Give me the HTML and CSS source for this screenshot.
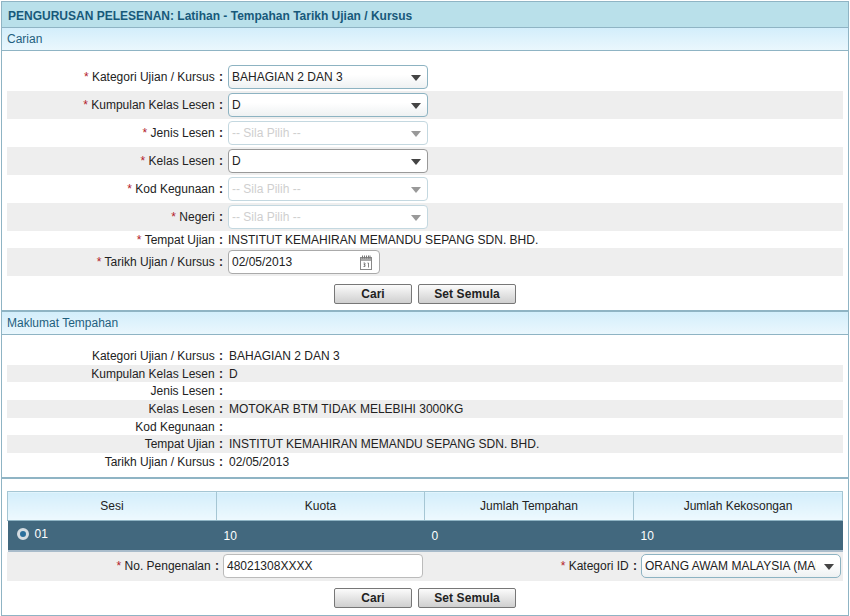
FILE: index.html
```html
<!DOCTYPE html>
<html lang="en">

<head>
  <meta charset="UTF-8">
  <title>Tempahan Tarikh Ujian / Kursus</title>
  <link rel="stylesheet" href="styles.css">
</head>

<body>
  <div class="page">
    <h1 class="page-title">PENGURUSAN PELESENAN: Latihan - Tempahan Tarikh Ujian / Kursus</h1>

    <h2 class="section-head">Carian</h2>
    <div class="form-rows">
      <div class="row">
        <label class="label"><span class="req">*</span> Kategori Ujian / Kursus <span class="colon">:</span></label>
        <div class="select-wrap"><select><option>BAHAGIAN 2 DAN 3</option></select></div>
      </div>
      <div class="row grey">
        <label class="label"><span class="req">*</span> Kumpulan Kelas Lesen <span class="colon">:</span></label>
        <div class="select-wrap"><select><option>D</option></select></div>
      </div>
      <div class="row">
        <label class="label"><span class="req">*</span> Jenis Lesen <span class="colon">:</span></label>
        <div class="select-wrap disabled"><select disabled><option>-- Sila Pilih --</option></select></div>
      </div>
      <div class="row grey">
        <label class="label"><span class="req">*</span> Kelas Lesen <span class="colon">:</span></label>
        <div class="select-wrap plain"><select><option>D</option></select></div>
      </div>
      <div class="row">
        <label class="label"><span class="req">*</span> Kod Kegunaan <span class="colon">:</span></label>
        <div class="select-wrap disabled"><select disabled><option>-- Sila Pilih --</option></select></div>
      </div>
      <div class="row grey">
        <label class="label"><span class="req">*</span> Negeri <span class="colon">:</span></label>
        <div class="select-wrap disabled"><select disabled><option>-- Sila Pilih --</option></select></div>
      </div>
      <div class="row short">
        <label class="label"><span class="req">*</span> Tempat Ujian <span class="colon">:</span></label>
        <span class="value">INSTITUT KEMAHIRAN MEMANDU SEPANG SDN. BHD.</span>
      </div>
      <div class="row grey">
        <label class="label"><span class="req">*</span> Tarikh Ujian / Kursus <span class="colon">:</span></label>
        <div class="date-box">
          <span>02/05/2013</span>
          <svg class="cal-icon" width="12" height="15" viewBox="0 0 12 15">
            <rect x="0.5" y="2.5" width="11" height="12" fill="#fff" stroke="#888"/>
            <rect x="1" y="3" width="10" height="3" fill="#aaa"/>
            <path d="M2.5 0.5v3M4.5 0.5v3M6.5 0.5v3M8.5 0.5v3M10 0.500v3" stroke="#777" stroke-width="1"/>
            <path d="M3.5 8h1.500v1.500h-1v0.500h1v1.500h-1.500M7.500 8h1v4.500" fill="none" stroke="#666" stroke-width="0.8"/>
          </svg>
        </div>
      </div>
    </div>
    <div class="buttons">
      <button class="btn btn-cari">Cari</button>
      <button class="btn btn-set">Set Semula</button>
    </div>

    <h2 class="section-head second">Maklumat Tempahan</h2>
    <div class="info-rows">
      <div class="info-row"><span class="label">Kategori Ujian / Kursus <span class="colon">:</span></span><span class="value">BAHAGIAN 2 DAN 3</span></div>
      <div class="info-row grey"><span class="label">Kumpulan Kelas Lesen <span class="colon">:</span></span><span class="value">D</span></div>
      <div class="info-row"><span class="label">Jenis Lesen <span class="colon">:</span></span><span class="value"></span></div>
      <div class="info-row grey"><span class="label">Kelas Lesen <span class="colon">:</span></span><span class="value">MOTOKAR BTM TIDAK MELEBIHI 3000KG</span></div>
      <div class="info-row"><span class="label">Kod Kegunaan <span class="colon">:</span></span><span class="value"></span></div>
      <div class="info-row grey"><span class="label">Tempat Ujian <span class="colon">:</span></span><span class="value">INSTITUT KEMAHIRAN MEMANDU SEPANG SDN. BHD.</span></div>
      <div class="info-row"><span class="label">Tarikh Ujian / Kursus <span class="colon">:</span></span><span class="value">02/05/2013</span></div>
    </div>

    <div class="bottom">
      <table class="sesi-table">
        <thead>
          <tr>
            <th class="col-sesi">Sesi</th>
            <th class="col-kuota">Kuota</th>
            <th class="col-tempahan">Jumlah Tempahan</th>
            <th>Jumlah Kekosongan</th>
          </tr>
        </thead>
        <tbody>
          <tr>
            <td class="sesi-cell"><span class="radio"></span><span class="sesi-no">01</span></td>
            <td>10</td>
            <td>0</td>
            <td>10</td>
          </tr>
        </tbody>
      </table>
      <div class="id-row">
        <label class="id-label"><span class="req">*</span> No. Pengenalan <span class="colon">:</span></label>
        <input class="id-input" type="text" value="48021308XXXX">
        <label class="cat-label"><span class="req">*</span> Kategori ID <span class="colon">:</span></label>
        <div class="select-wrap cat-select"><select><option>ORANG AWAM MALAYSIA (MALAYSIA)</option></select></div>
      </div>
      <div class="buttons last">
        <button class="btn btn-cari">Cari</button>
        <button class="btn btn-set">Set Semula</button>
      </div>
    </div>
  </div>
</body>

</html>
```

FILE: styles.css
```css
body {
  margin: 0;
  padding: 0;
  background: #fff;
  font-family: 'Liberation Sans', Arial, sans-serif;
  font-size: 12px;
  color: #222;
}

.page {
  width: 846px;
  height: 613px;
  margin: 1px 0 0 1px;
  border: 1px solid #8fb4c4;
  overflow: hidden;
}

.page-title {
  margin: 0;
  height: 25px;
  line-height: 28px;
  padding-left: 6px;
  font-size: 12px;
  font-weight: bold;
  color: #17597a;
  background: #b9e0ea;
  border-bottom: 1px solid #8fb4c4;
}

.section-head {
  margin: 0;
  height: 22px;
  line-height: 23px;
  padding-left: 5px;
  font-size: 12px;
  font-weight: normal;
  color: #1f5f7e;
  background: linear-gradient(#d3eefb, #eaf7fd);
  border-bottom: 1px solid #8fb4c4;
}

.section-head.second {
  border-top: 2px solid #8fb4c4;
}

.form-rows {
  padding: 12px 5px 0;
}

.row {
  display: flex;
  align-items: center;
  height: 28px;
}

.row.short {
  height: 17px;
}

.grey,
.id-row {
  background: #eeeeee;
}

.label {
  width: 216px;
  flex: none;
  text-align: right;
}

.colon {
  margin-left: 1px;
  font-weight: bold;
}

.req {
  color: #b3202a;
}

.value {
  margin-left: 5px;
}

.select-wrap {
  position: relative;
  width: 200px;
  height: 24px;
  margin-left: 5px;
  box-sizing: border-box;
  border: 1px solid #8db3c2;
  border-radius: 4px;
  background: linear-gradient(#fff 40%, #eef1f2);
}

.select-wrap select {
  appearance: none;
  width: 100%;
  height: 100%;
  padding: 0 24px 0 3px;
  border: none;
  background: transparent;
  font-family: inherit;
  font-size: 12px;
  color: #222;
}

.select-wrap::after {
  content: "";
  position: absolute;
  right: 6px;
  top: 9px;
  border-left: 5px solid transparent;
  border-right: 5px solid transparent;
  border-top: 6px solid #444;
}

.select-wrap.plain {
  border-color: #999;
  background: #fff;
}

.select-wrap.disabled {
  border-color: #c4d8e0;
  background: #fff;
}

.select-wrap.disabled select {
  color: #bbb;
}

.select-wrap.disabled::after {
  border-top-color: #999;
}

.date-box {
  display: flex;
  align-items: center;
  justify-content: space-between;
  width: 152px;
  height: 24px;
  margin-left: 5px;
  padding: 0 7px 0 3px;
  box-sizing: border-box;
  border: 1px solid #aaa;
  border-radius: 4px;
  background: #fff;
}

.buttons {
  display: flex;
  justify-content: center;
  gap: 6px;
  margin-top: 8px;
  margin-bottom: 6px;
}

.buttons.last {
  margin-top: 7px;
}

.btn {
  height: 20px;
  padding: 0;
  border: 1px solid #777;
  border-radius: 2px;
  background: linear-gradient(#fbfbfb, #cfcfcf);
  font-family: inherit;
  font-size: 12px;
  font-weight: bold;
  color: #222;
}

.btn-cari {
  width: 78px;
}

.btn-set {
  width: 98px;
  letter-spacing: 0.1px;
}

.info-rows {
  padding: 12px 5px 0;
  height: 130px;
}

.info-row {
  display: flex;
  align-items: center;
  height: 17.700px;
}

.info-row .value {
  margin-left: 6px;
}

.bottom {
  border-top: 2px solid #8fb4c4;
  padding: 12px 5px 0;
}

.sesi-table {
  width: 836px;
  border-collapse: collapse;
  table-layout: fixed;
}

.col-sesi {
  width: 209px;
}

.col-kuota {
  width: 208px;
}

.col-tempahan {
  width: 209px;
}

.sesi-table th {
  box-sizing: border-box;
  height: 29px;
  padding: 0;
  font-weight: normal;
  background: linear-gradient(#d3eefb, #eef9fe);
  border: 1px solid #a5c6d4;
  border-bottom: 1px solid #8fb4c4;
}

.sesi-table td {
  box-sizing: border-box;
  height: 30px;
  padding: 1px 0 0 7px;
  color: #fff;
  background: #42687e;
  border-bottom: 2px solid #a9bccb;
}

.sesi-cell {
  vertical-align: top;
}

.sesi-table td.sesi-cell {
  padding: 6px 0 0 9px;
}

.radio {
  display: inline-block;
  box-sizing: border-box;
  width: 12px;
  height: 12px;
  margin-right: 6px;
  vertical-align: -2px;
  border: 3px solid #d5dde2;
  border-radius: 50%;
  background: #2a6f9c;
}

.id-row {
  display: flex;
  align-items: center;
  height: 29px;
}

.id-label {
  width: 212px;
  text-align: right;
}

.id-input {
  width: 200px;
  height: 24px;
  margin-left: 4px;
  padding: 0 3px;
  box-sizing: border-box;
  border: 1px solid #bbb;
  border-radius: 4px;
  font-family: inherit;
  font-size: 12px;
  color: #222;
}

.cat-label {
  width: 214px;
  text-align: right;
}

.select-wrap.cat-select {
  margin-left: 4px;
  border-radius: 5px;
}
```
